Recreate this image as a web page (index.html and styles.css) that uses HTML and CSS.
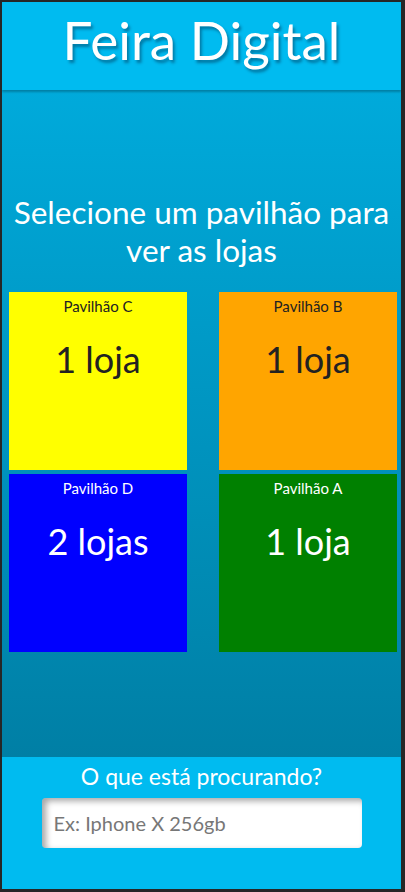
FILE: index.html
```html
<!DOCTYPE html>
<html lang="pt">
<head>
<meta charset="utf-8">
<title>Feira Digital</title>
<link rel="stylesheet" href="styles.css">
</head>
<body>
<div class="frame">
  <header class="header">
    <h1 class="brand">Feira Digital</h1>
  </header>
  <main class="main">
    <h2 class="prompt">Selecione um pavilhão para ver as lojas</h2>
    <div class="grid">
      <div class="pav pav-c"><div class="pav-name">Pavilhão C</div><div class="pav-count">1 loja</div></div>
      <div class="pav pav-b"><div class="pav-name">Pavilhão B</div><div class="pav-count">1 loja</div></div>
      <div class="pav pav-d"><div class="pav-name">Pavilhão D</div><div class="pav-count">2 lojas</div></div>
      <div class="pav pav-a"><div class="pav-name">Pavilhão A</div><div class="pav-count">1 loja</div></div>
    </div>
  </main>
  <footer class="footer">
    <div class="search-label">O que está procurando?</div>
    <input class="search" type="text" placeholder="Ex: Iphone X 256gb">
  </footer>
</div>
</body>
</html>
```
FILE: styles.css
```css
html, body {
  margin: 0;
  padding: 0;
  background: #262626;
}
body {
  font-family: Lato, "Open Sans", sans-serif;
}
.frame {
  box-sizing: border-box;
  width: 405px;
  height: 892px;
  border-style: solid;
  border-color: #262626;
  border-width: 2px 4px 3px 2px;
  display: flex;
  flex-direction: column;
  overflow: hidden;
}
.header {
  height: 88px;
  flex: none;
  background: #00bbf0;
  box-shadow: 0 2px 2px rgba(0, 0, 0, 0.25);
  position: relative;
  z-index: 1;
  display: flex;
  justify-content: center;
}
.brand {
  margin: 0;
  padding-top: 8px;
  color: #fff;
  font-weight: 400;
  font-size: 53px;
  line-height: 60px;
  text-shadow: 2px 3px 3px rgba(0, 40, 70, 0.45);
}
.main {
  flex: 1;
  background: linear-gradient(#00aadb, #007fa5);
  padding-top: 103px;
}
.prompt {
  margin: 0 0 23px;
  color: #fff;
  font-weight: 400;
  font-size: 31.5px;
  line-height: 38px;
  text-align: center;
}
.grid {
  display: grid;
  grid-template-columns: 178px 178px;
  grid-auto-rows: 178px;
  column-gap: 32px;
  row-gap: 4px;
  padding-left: 7px;
}
.pav {
  display: flex;
  flex-direction: column;
  align-items: center;
  padding-top: 5px;
}
.pav-name {
  font-size: 15px;
  line-height: 18px;
}
.pav-count {
  margin-top: 22px;
  font-size: 36px;
  line-height: 44px;
}
.pav-c { background: #ffff00; color: #222; }
.pav-b { background: #ffa500; color: #222; }
.pav-d { background: #0000ff; color: #fff; }
.pav-a { background: #008000; color: #fff; }
.footer {
  height: 132px;
  flex: none;
  background: #00bbf0;
  display: flex;
  flex-direction: column;
  align-items: center;
}
.search-label {
  margin-top: 4px;
  color: #fff;
  font-size: 23px;
  line-height: 30px;
}
.search {
  box-sizing: border-box;
  margin-top: 7px;
  width: 320px;
  height: 50px;
  border: none;
  border-radius: 4px;
  background: #fff;
  box-shadow: inset 4px 3px 6px rgba(0, 0, 0, 0.35);
  padding: 0 12px;
  font-family: Lato, "Open Sans", sans-serif;
  font-size: 20px;
  color: #333;
  outline: none;
}
.search::placeholder {
  color: #777;
}
```
